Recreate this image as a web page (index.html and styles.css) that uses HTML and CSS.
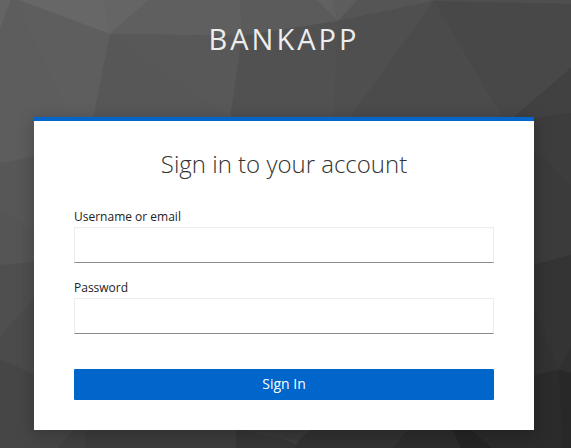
FILE: index.html
```html
<!DOCTYPE html>
<html lang="en">
<head>
<meta charset="utf-8">
<title>Sign in to BankApp</title>
<link rel="stylesheet" href="styles.css">
</head>
<body>
<svg class="backdrop" viewBox="0 0 571 448" preserveAspectRatio="none" aria-hidden="true">
  <defs>
    <linearGradient id="shade" gradientUnits="userSpaceOnUse" x1="0" y1="0" x2="571" y2="448">
      <stop offset="0" stop-color="#646464"/>
      <stop offset=".5" stop-color="#4b4b4b"/>
      <stop offset="1" stop-color="#282828"/>
    </linearGradient>
  </defs>
  <rect width="571" height="448" fill="url(#shade)"/>
  <path fill="#646464" d="M0 0H11L0 29Z"/>
  <path fill="#5e5e5e" d="M11 0H19L110 34 93 120 50 156 0 163V29Z"/>
  <path fill="#5d5d5d" d="M15 0L70 117 50 156 0 163V29L11 0Z"/>
  <path fill="#676767" d="M19 0H105L110 34Z"/>
  <path fill="#656565" d="M105 0H149L110 34Z"/>
  <path fill="#5f5f5f" d="M149 0H240L242 36 110 34Z"/>
  <path fill="#5b5b5b" d="M240 0H316L338 21 242 36Z"/>
  <path fill="#616161" d="M316 0H333L338 21Z"/>
  <path fill="#5d5d5d" d="M333 0H358L338 21Z"/>
  <path fill="#555" d="M358 0H430L434 1 338 21Z"/>
  <path fill="#575757" d="M110 34L242 36 230 120H93Z"/>
  <path fill="#585858" d="M110 34L242 36 230 120Z"/>
  <path fill="#515151" d="M242 36L338 21 334 120H230Z"/>
  <path fill="#4f4f4f" d="M338 21L434 1 348 120H334Z"/>
  <path fill="#4b4b4b" d="M434 1L505 120H348Z"/>
  <path fill="#484848" d="M434 1L571 4V68L513 118H504Z"/>
  <path fill="#4f4f4f" d="M434 1V0H571V4Z"/>
  <path fill="#414141" d="M571 68V113L534 118H513Z"/>
  <path fill="#3d3d3d" d="M530 119L571 113V186L530 145Z"/>
  <path fill="#3b3b3b" d="M530 145L571 186V255L530 266Z"/>
  <path fill="#343434" d="M530 266L571 255V347L559 370 530 376Z"/>
  <path fill="#323232" d="M530 299L559 370 530 376Z"/>
  <path fill="#303030" d="M571 347V373L559 370Z"/>
  <path fill="#2b2b2b" d="M530 376L559 370 563 448H530Z"/>
  <path fill="#282828" d="M559 370L571 373V448H563Z"/>
  <path fill="#575757" d="M0 163L50 154V239L0 210Z"/>
  <path fill="#555" d="M0 210L50 239V260L0 265Z"/>
  <path fill="#4f4f4f" d="M0 265L50 260V281L0 336Z"/>
  <path fill="#4b4b4b" d="M0 336L50 281V382L0 359Z"/>
  <path fill="#464646" d="M0 359L40 377 76 425 58 448H0Z"/>
  <path fill="#404040" d="M76 425H86L84 448H58Z"/>
  <path fill="#3d3d3d" d="M86 425H236V448H84Z"/>
  <path fill="#393939" d="M236 425H310L303 440 286 439 236 427Z"/>
  <path fill="#363636" d="M236 427L286 440 303 448H236Z"/>
  <path fill="#323232" d="M310 430L410 425 393 448H294L300 439Z"/>
  <path fill="#2d2d2d" d="M393 448L411 425H450L461 448Z"/>
  <path fill="#252525" d="M450 425H466L492 448H461Z"/>
  <path fill="#2b2b2b" d="M466 425H540V448H492Z"/>
</svg>
<div class="page">
  <header class="brand">BANKAPP</header>
  <main class="card">
    <h1 class="title">Sign in to your account</h1>
    <form class="form">
      <div class="field">
        <label class="label" for="username">Username or email</label>
        <input class="input" id="username" type="text">
      </div>
      <div class="field">
        <label class="label" for="password">Password</label>
        <input class="input" id="password" type="password">
      </div>
      <button class="submit" type="button">Sign In</button>
    </form>
  </main>
</div>
</body>
</html>
```
FILE: styles.css
```css
* { box-sizing: border-box; }
html, body { margin: 0; height: 100%; overflow: hidden; }
body {
  background: #4b4b4b;
  font-family: "Open Sans", "Noto Sans", sans-serif;
  font-size: 12px;
  color: #222;
}
.backdrop {
  position: absolute;
  inset: 0;
  width: 100%;
  height: 100%;
}
.page {
  position: relative;
  width: 500px;
  margin-left: 34px;
}
.brand {
  height: 117px;
  padding-top: 20px;
  font-size: 29px;
  line-height: 38px;
  letter-spacing: 3px;
  text-align: center;
  color: #ededed;
}
.card {
  height: 313px;
  padding: 27px 40px 30px;
  border-top: 4px solid #06c;
  background: #fff;
  box-shadow: 0 4px 16px 1px rgba(3, 3, 3, .22);
}
.title {
  margin: 0 0 28px;
  font-size: 24px;
  font-weight: 300;
  line-height: 32px;
  text-align: center;
  color: #333;
}
.form {
  display: flex;
  flex-direction: column;
}
.field {
  display: flex;
  flex-direction: column;
  margin-bottom: 16px;
}
.label {
  height: 19px;
  line-height: 17px;
}
.input {
  width: 100%;
  height: 36px;
  border: 1px solid #ededed;
  border-bottom-color: #8a8d90;
  background: #fff;
  outline: none;
}
.submit {
  height: 31px;
  margin-top: 19px;
  padding: 0 0 1px;
  border: 0;
  border-radius: 1px;
  background: #06c;
  color: #fff;
  font: 500 14px/28px "Open Sans", "Noto Sans", sans-serif;
}
```
